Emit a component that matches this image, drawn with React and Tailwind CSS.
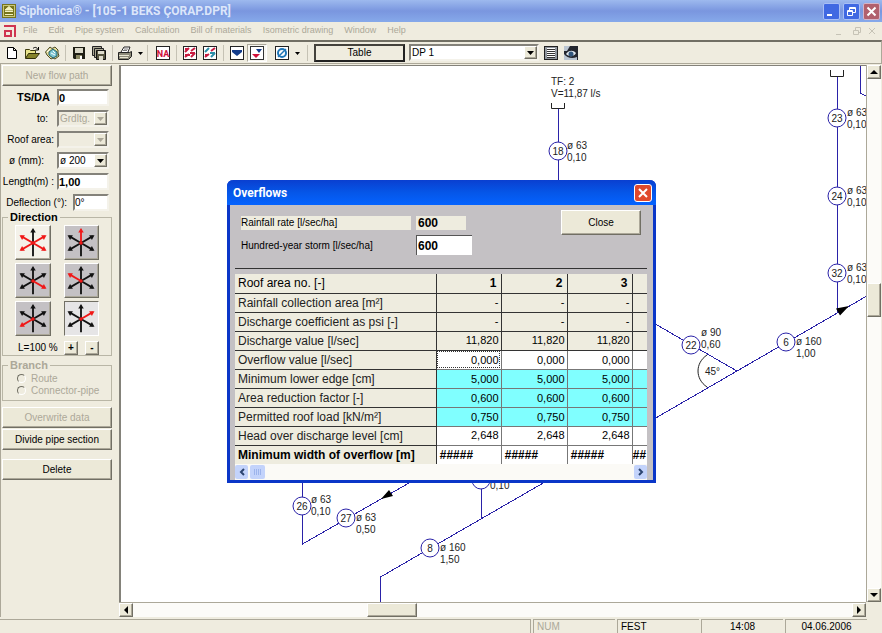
import { useState } from 'react';

const menus = ['File', 'Edit', 'Pipe system', 'Calculation', 'Bill of materials', 'Isometric drawing', 'Window', 'Help'];

const raised = 'border border-t-white border-l-white border-b-[#716f64] border-r-[#716f64] shadow-[inset_-1px_-1px_0_#aca899] bg-[#ece9d8]';
const sunken = 'border-2 border-t-[#84827a] border-l-[#84827a] border-b-[#f4f2ea] border-r-[#f4f2ea]';

// six spokes of the direction picker, clockwise from the top
const spokes = [
  [17, 3],
  [30, 10],
  [30, 25],
  [17, 32],
  [4, 25],
  [4, 10],
];

const directions = [
  { name: 'All horizontal', red: [1, 2, 4, 5] },
  { name: 'Up', red: [0] },
  { name: 'Right down', red: [2] },
  { name: 'Left up', red: [5] },
  { name: 'Left down', red: [4] },
  { name: 'Right up', red: [1] },
];

const columns = ['1', '2', '3'];
const rows = [
  { label: 'Rainfall collection area [m²]', value: '-', kind: 'fixed' },
  { label: 'Discharge coefficient as psi [-]', value: '-', kind: 'fixed' },
  { label: 'Discharge value [l/sec]', value: '11,820', kind: 'fixed' },
  { label: 'Overflow value [l/sec]', value: '0,000', kind: 'edit' },
  { label: 'Minimum lower edge [cm]', value: '5,000', kind: 'cyan' },
  { label: 'Area reduction factor [-]', value: '0,600', kind: 'cyan' },
  { label: 'Permitted roof load [kN/m²]', value: '0,750', kind: 'cyan' },
  { label: 'Head over discharge level [cm]', value: '2,648', kind: 'result' },
];

const cellColors = {
  fixed: 'border-[#333] bg-[#eeecdf]',
  edit: 'border-[#777] bg-white',
  cyan: 'border-[#777] bg-[#80ffff]',
  result: 'border-[#777] bg-white',
};

const nodes = [
  { id: '18', x: 558, y: 151, tx: 567, ty: 149, d: 'ø 63', l: '0,10' },
  { id: '23', x: 837, y: 118, tx: 847, ty: 116, d: 'ø 63', l: '0,10' },
  { id: '24', x: 837, y: 196, tx: 847, ty: 194, d: 'ø 63', l: '0,10' },
  { id: '32', x: 837, y: 273, tx: 847, ty: 271, d: 'ø 63', l: '0,10' },
  { id: '22', x: 691, y: 345, tx: 701, ty: 336, d: 'ø 90', l: '0,60' },
  { id: '6', x: 786, y: 342, tx: 796, ty: 345, d: 'ø 160', l: '1,00' },
  { id: '26', x: 302, y: 506, tx: 311, ty: 503, d: 'ø 63', l: '0,10' },
  { id: '27', x: 346, y: 518, tx: 356, ty: 521, d: 'ø 63', l: '0,50' },
  { id: '8', x: 430, y: 548, tx: 440, ty: 551, d: 'ø 160', l: '1,50' },
];

function TitleBar() {
  return (
    <header className="flex h-[22px] items-center bg-linear-to-b from-[#9db9ee] via-[#7a96df] to-[#86a9ea] pr-[2px] pl-[2px]">
      <svg width="14" height="14" viewBox="0 0 14 14">
        <rect width="14" height="14" fill="#77751c" />
        <rect x="1.500" y="1.500" width="11" height="11" fill="none" stroke="#c9c77c" />
        <path d="M3 6h8L7 2.500zM3 7.500h8M3 10.500h8" fill="#f5f3c0" stroke="#f5f3c0" />
      </svg>
      <h1 className="ml-[3px] flex-1 font-[Roboto,sans-serif] text-[12px] font-bold whitespace-nowrap text-[#dce6fa]">
        Siphonica® - [105-1 BEKS ÇORAP.DPR]
      </h1>
      <div className="flex gap-[3px]">
        <button aria-label="Minimize" className="h-[17px] w-[17px] rounded-[2px] border border-[#a9bff5] bg-[#4069e2]">
          <svg width="15" height="15"><path d="M3 11h5" stroke="#fff" strokeWidth="2" /></svg>
        </button>
        <button aria-label="Restore" className="h-[17px] w-[17px] rounded-[2px] border border-[#a9bff5] bg-[#4069e2]">
          <svg width="15" height="15" fill="none" stroke="#fff">
            <path d="M3.500 6.500h5v5h-5zM3 7.500h6M5.500 6V3.500h6v5H9M5.500 4.500h6" />
          </svg>
        </button>
        <button aria-label="Close window" className="h-[17px] w-[17px] rounded-[2px] border border-[#d3b4c8] bg-[#b1606d]">
          <svg width="15" height="15"><path d="M3.500 3.500l8 8M11.500 3.500l-8 8" stroke="#fff" strokeWidth="2" /></svg>
        </button>
      </div>
    </header>
  );
}

function MenuBar() {
  return (
    <nav className="flex h-[18px] items-center gap-[7px] bg-[#efecdf] pl-1 text-[9px] text-[#aca899]">
      <svg width="12" height="12" viewBox="0 0 12 12" fill="none" stroke="#cf3550" strokeWidth="2">
        <path d="M0 1h11v11M1 12V6h6v6M1 11h6" />
      </svg>
      <div className="flex flex-1 gap-[11px] whitespace-nowrap">
        {menus.map((m) => (
          <button key={m}>{m}</button>
        ))}
      </div>
      <svg width="44" height="12" fill="none" stroke="#c6c3b6" className="mr-1">
        <path d="M2 9.500h5M19.500 5.500h5v4h-5zM21.500 5V2.500h5v5H25M35 3l6 6M41 3l-6 6" />
      </svg>
    </nav>
  );
}

function Separator() {
  return <span className="mx-[3px] h-4 w-px bg-[#c5c2b4]" />;
}

function ToolButton({ label, children, wide, pressed }) {
  return (
    <button
      aria-label={label}
      className={`flex h-[18px] items-center justify-center ${wide ? 'w-[28px]' : 'w-[20px]'} ${
        pressed ? 'border border-t-[#aca899] border-l-[#aca899] border-r-white border-b-white bg-[#f8f7f1]' : ''
      }`}
    >
      <svg width={wide ? 26 : 16} height="16" viewBox={wide ? '0 0 26 16' : '0 0 16 16'} className="shrink-0">
        {children}
        {wide && <path d="M21 7h5l-2.500 3z" fill="#000" />}
      </svg>
    </button>
  );
}

function Toolbar() {
  return (
    <div className="flex h-[24px] items-center border-t-2 border-r border-b border-t-[#716f64] border-r-[#aca899] border-b-[#aca899] bg-[#efecdf] pl-[2px]">
      <ToolButton label="New">
        <path d="M3.500 2.500h6l3 3v8h-9zM9.500 2.500v3h3" fill="#fff" stroke="#000" />
      </ToolButton>
      <ToolButton label="Open">
        <path d="M1.500 13V4.500h4l1 1h5v3" fill="#e8e38a" stroke="#3f3d10" />
        <path d="M1.500 13.500l3-5h11l-4 5z" fill="#85832a" stroke="#2f2d08" />
        <path d="M9 3.500c2-2 4-1 5 1M14.500 2v3h-3" fill="none" stroke="#000" />
      </ToolButton>
      <ToolButton label="Open project">
        <path d="M1.500 7L6 2l2 1.500L11 2l3 3v3l1 3-4 3-2-1-2 1-4-4z" fill="#e4df9a" stroke="#4c4a24" />
        <path d="M5 7l4-3 4 3v4l-4 2-4-3z" fill="#7cc6d2" stroke="#1f5c6b" />
        <path d="M3 7l3-3M7 8l4 2M9 6l2 2" stroke="#fff" />
      </ToolButton>
      <Separator />
      <ToolButton label="Save">
        <path d="M2 2h12v12H3l-1-1z" fill="#1e1e14" />
        <rect x="4" y="3" width="8" height="5" fill="#d9d7c6" />
        <rect x="5" y="10" width="6" height="4" fill="#8a8862" />
        <rect x="9" y="11" width="2" height="3" fill="#fff" />
      </ToolButton>
      <ToolButton label="Save all">
        <path d="M1.500 1.500h9v9h-9z" fill="#aaa893" stroke="#222" />
        <path d="M3.500 3.500h9v9h-9z" fill="#aaa893" stroke="#222" />
        <path d="M5.500 5.500h9v9h-9z" fill="#55543e" stroke="#111" />
        <path d="M7 6h6v3H7zM8 11h4v4H8z" fill="#dedccc" />
      </ToolButton>
      <Separator />
      <ToolButton label="Print" wide>
        <path d="M4 7l3-5h6l-2 5" fill="#fff" stroke="#222" />
        <path d="M7 4h4M6 5.500h4" stroke="#777" />
        <path d="M1.500 7.500h11l2-1v5l-3 3h-10z" fill="#8c8a78" stroke="#222" />
        <path d="M2 10.500h10M3 12.500h8" stroke="#e9e6d2" />
      </ToolButton>
      <Separator />
      <span className="w-[2px]" />
      <ToolButton label="NA">
        <rect x="1.500" y="1.500" width="13" height="13" fill="#fff" stroke="#222" />
        <text x="8" y="12" textAnchor="middle" fontSize="9" fontWeight="bold" fill="#d0103a" className="font-[Roboto,sans-serif]">NA</text>
      </ToolButton>
      <Separator />
      <ToolButton label="Isometric view red">
        <rect x="1.500" y="1.500" width="13" height="13" fill="#fff" stroke="#222" />
        <path d="M3 7l4-4M9 6l4-3M3 12l4-3M9 12l4-4M3 4h4M8 8h5M3 10h5" stroke="#c81c40" strokeWidth="2" />
      </ToolButton>
      <ToolButton label="Isometric view mixed">
        <rect x="1.500" y="1.500" width="13" height="13" fill="#fff" stroke="#222" />
        <path d="M3 7l4-4M9 12l4-4M8 8h5" stroke="#2b8fa8" strokeWidth="2" />
        <path d="M9 6l4-3M3 12l4-3M3 10h3" stroke="#c81c40" strokeWidth="2" />
      </ToolButton>
      <Separator />
      <ToolButton label="Show all">
        <rect x="1.500" y="1.500" width="13" height="13" fill="#fff" stroke="#222" />
        <path d="M3 5h10v2l-5 4-5-4z" fill="#123c8c" />
      </ToolButton>
      <ToolButton label="Filter" pressed>
        <rect x="1.500" y="1.500" width="13" height="13" fill="#fff" stroke="#333" />
        <path d="M7 4h6l-3 4z" fill="#123c8c" />
        <path d="M3 9h8l-4 4z" fill="#d0103a" />
      </ToolButton>
      <span className="w-[6px]" />
      <ToolButton label="Diameter" wide>
        <rect x="1.500" y="1.500" width="13" height="13" fill="#fff" stroke="#222" />
        <circle cx="8" cy="8" r="4" fill="none" stroke="#2077b8" strokeWidth="2" />
        <path d="M4 12l8-8" stroke="#2077b8" strokeWidth="1.500" />
      </ToolButton>
      <span className="mx-[6px] h-4 w-px bg-[#c5c2b4]" />
      <button className="h-[18px] w-[91px] border-2 border-t-[#44423c] border-l-[#44423c] border-r-[#222] border-b-[#222] bg-[#efecdf] text-[10px] leading-[14px]">
        Table
      </button>
      <Combo label="Discharge pipe" options={['DP 1']} className="ml-1 w-[130px]" />
      <span className="w-[2px]" />
      <ToolButton label="List">
        <rect x="1.500" y="1.500" width="13" height="13" fill="#8e949c" stroke="#222" />
        <rect x="4" y="3" width="8" height="10" fill="#fff" />
        <path d="M4 4.500h8M4 6.500h8M4 8.500h8M4 10.500h8M4 12.500h8" stroke="#333" />
      </ToolButton>
      <ToolButton label="Preview">
        <rect x="1" y="1" width="14" height="14" fill="#23262e" />
        <path d="M1 1h6L4 6H1zM1 9c3 4 8 5 13 3v3H1z" fill="#b9c4d0" />
        <path d="M3 9c3-4 7-4 10-1-2 4-7 4-10 1z" fill="#dfe6ee" />
        <circle cx="8" cy="9" r="2.500" fill="#31567c" />
      </ToolButton>
    </div>
  );
}

function Combo({ label, id, options, disabled, className }) {
  return (
    <div className={`relative h-[17px] ${sunken} ${disabled ? 'bg-[#efecdf]' : 'bg-white'} ${className}`}>
      <select
        id={id}
        aria-label={label}
        disabled={disabled}
        className={`block h-[13px] w-full appearance-none pl-[1px] text-[10px] leading-[13px] outline-none ${
          disabled ? 'text-[#aca899]' : 'text-black'
        }`}
      >
        {options.map((o) => (
          <option key={o}>{o}</option>
        ))}
      </select>
      <span className={`pointer-events-none absolute top-0 right-0 flex h-[13px] w-[13px] items-center justify-center ${raised}`}>
        <svg width="7" height="4"><path d="M0 0h7L3.500 4z" fill={disabled ? '#aca899' : '#000'} /></svg>
      </span>
    </div>
  );
}

function Field({ id, label, bold, children }) {
  return (
    <div className="flex h-[17px] items-center justify-end gap-[3px]">
      <label htmlFor={id} className={`whitespace-nowrap ${bold ? 'pr-1 text-[11px] font-bold' : ''}`}>
        {label}
      </label>
      {children}
    </div>
  );
}

function DirectionIcon({ red }) {
  return (
    <svg width="32" height="32" viewBox="0 0 34 35">
      {spokes.map(([x, y], i) => {
        const color = red.includes(i) ? '#f01818' : '#111';
        const angle = (Math.atan2(y - 17.5, x - 17) * 180) / Math.PI;
        return (
          <g key={i}>
            <path d={`M17 17.500L${x} ${y}`} stroke={color} strokeWidth="2" />
            {i !== 3 && <path d="M2 0l-5-3v6z" fill={color} transform={`translate(${x} ${y}) rotate(${angle})`} />}
          </g>
        );
      })}
      <circle cx="17" cy="17.500" r="2" fill="#f01818" />
    </svg>
  );
}

function SideButton({ children, disabled, className = '' }) {
  return (
    <button disabled={disabled} className={`h-[21px] w-full text-[10px] ${raised} ${disabled ? 'text-[#aca899]' : ''} ${className}`}>
      {children}
    </button>
  );
}

function Sidebar() {
  const [direction, setDirection] = useState(5);

  return (
    <aside className="w-[119px] shrink-0 border-l border-[#aca899] bg-[#efecdf] pt-px pr-[7px] pl-px text-[10px]">
      <SideButton disabled>New flow path</SideButton>
      <div className="mt-[3px] flex flex-col gap-1 pr-[3px]">
        <Field id="ts" label="TS/DA" bold>
          <input id="ts" defaultValue="0" className={`h-[17px] w-[52px] bg-white text-[11px] font-bold ${sunken}`} />
        </Field>
        <Field id="to" label={<span className="pr-[6px]">to:</span>}>
          <Combo id="to" options={['Grdltg.']} disabled className="w-[52px]" />
        </Field>
        <Field id="roof" label="Roof area:">
          <Combo id="roof" options={['']} disabled className="w-[52px]" />
        </Field>
        <Field id="dia" label={<span className="pr-[10px]">ø (mm):</span>}>
          <Combo id="dia" options={['ø 200']} className="w-[52px]" />
        </Field>
        <Field id="len" label="Length(m) :">
          <input id="len" defaultValue="1,00" className={`h-[17px] w-[52px] bg-white text-[11px] font-bold ${sunken}`} />
        </Field>
        <Field id="defl" label={<span className="pr-[3px]">Deflection (°):</span>}>
          <input id="defl" defaultValue="0°" className={`h-[17px] w-[36px] bg-white text-[10px] ${sunken}`} />
        </Field>
      </div>

      <fieldset className="border border-[#b9b6a6] px-[12px]">
        <legend className="-ml-[7px] px-[2px] text-[11px] leading-[13px] font-bold">Direction</legend>
        <div className="grid grid-cols-2 gap-x-[13px] gap-y-[3px] pt-px">
          {directions.map((d, i) => (
            <button
              key={d.name}
              aria-label={d.name}
              aria-pressed={direction === i}
              onClick={() => setDirection(i)}
              className={`flex h-[35px] items-center justify-center border ${
                direction === i
                  ? 'border-t-[#716f64] border-l-[#716f64] border-r-white border-b-white bg-[#e6e5e6]'
                  : 'border-t-white border-l-white border-r-[#716f64] border-b-[#716f64] shadow-[inset_-1px_-1px_0_#aca899]'
              } ${direction !== i && (i === 0 ? 'bg-[#f4f2ea]' : 'bg-[#c4c1c4]')}`}
            >
              <DirectionIcon red={d.red} />
            </button>
          ))}
        </div>
        <div className="flex h-[19px] items-end">
          <span className="flex-1 pl-[3px] leading-[14px]">L=100 %</span>
          <button aria-label="Longer" className={`mr-[7px] h-[14px] w-[14px] leading-[10px] font-bold ${raised}`}>+</button>
          <button aria-label="Shorter" className={`h-[14px] w-[14px] leading-[10px] font-bold ${raised}`}>-</button>
        </div>
      </fieldset>

      <fieldset disabled className="mt-[3px] border border-[#b9b6a6] pb-1 pl-[14px] text-[#aca899]">
        <legend className="-ml-[9px] px-[2px] text-[11px] leading-[13px] font-bold">Branch</legend>
        {['Route', 'Connector-pipe'].map((b) => (
          <label key={b} className="flex h-[12px] items-center gap-[5px] whitespace-nowrap">
            <input
              type="radio"
              name="branch"
              className="h-[9px] w-[9px] shrink-0 appearance-none rounded-full border border-t-[#716f64] border-l-[#716f64] border-r-white border-b-white"
            />
            {b}
          </label>
        ))}
      </fieldset>

      <SideButton disabled className="mt-[6px]">Overwrite data</SideButton>
      <SideButton className="mt-px">Divide pipe section</SideButton>
      <SideButton className="mt-[9px]">Delete</SideButton>
    </aside>
  );
}

function Diagram() {
  return (
    <svg width="100%" height="100%" className="absolute inset-0" fontSize="10" fill="#222">
      <g transform="translate(-121 -66)">
        <g fill="none" stroke="#2a22a8" shapeRendering="crispEdges">
          <path d="M558.500 109V190M837.500 77V312M860.500 60V93L866 96M481.500 480V518M302.500 480V544L409 483" />
          <path d="M380.500 602V577L872 293M650 321L737 371" />
        </g>
        <g fill="none" stroke="#222">
          <path d="M551.500 103v5.500h13v-5.500M830.500 70v6.500h13v-6.500" />
          <path d="M707 355c-12 8-12 24 0 32" />
        </g>
        <path d="M849 306L836 308.500L840 315.500zM381 499L389 490L393 496z" fill="#000" />
        <circle cx="481" cy="480" r="9" fill="#fff" stroke="#2a22a8" />
        <text x="490" y="489">0,10</text>
        {nodes.map((n) => (
          <g key={n.id}>
            <circle cx={n.x} cy={n.y} r="9" fill="#fff" stroke="#2a22a8" />
            <text x={n.x} y={n.y + 4} textAnchor="middle">{n.id}</text>
            <text x={n.tx} y={n.ty}>{n.d}</text>
            <text x={n.tx} y={n.ty + 12}>{n.l}</text>
          </g>
        ))}
        <text x="551" y="85">TF: 2</text>
        <text x="551" y="97">V=11,87 l/s</text>
        <text x="705" y="375">45°</text>
      </g>
    </svg>
  );
}

function OverflowTable() {
  return (
    <table className="w-full table-fixed border-collapse text-[11px]">
      <colgroup>
        <col className="w-[201px]" />
        <col className="w-[65px]" />
        <col className="w-[66px]" />
        <col className="w-[65px]" />
        <col />
      </colgroup>
      <thead>
        <tr className="h-[19px] bg-[#eeecdf]">
          <th className="border-r border-b border-[#333] px-[3px] py-0 text-left text-[12px] leading-[18px] font-normal">
            Roof area no. [-]
          </th>
          {columns.map((c) => (
            <th key={c} className="border-r border-b border-[#333] px-1 py-0 text-right text-[12px] leading-[18px]">{c}</th>
          ))}
          <td className="border-b border-[#333]" />
        </tr>
      </thead>
      <tbody>
        {rows.map((row) => (
          <tr key={row.label} className="h-[19px]">
            <th className="border-r border-b border-[#333] bg-[#eeecdf] px-[3px] py-0 text-left text-[12px] leading-[18px] font-normal whitespace-nowrap text-[#222]">
              {row.label}
            </th>
            {columns.map((c) => (
              <td
                key={c}
                className={`border-r border-b px-[2px] py-0 text-right ${cellColors[row.kind]} ${
                  row.kind === 'edit' && c === '1' ? 'outline-1 -outline-offset-2 outline-[#333] outline-dotted' : ''
                }`}
              >
                {row.kind === 'edit' || row.kind === 'cyan' ? (
                  <input
                    aria-label={`${row.label} ${c}`}
                    defaultValue={row.value}
                    className="block h-[18px] w-full text-right outline-none"
                  />
                ) : (
                  row.value
                )}
              </td>
            ))}
            <td className={`border-b ${cellColors[row.kind]}`} />
          </tr>
        ))}
        <tr className="h-[19px] font-bold">
          <th className="border-r border-[#333] bg-[#eeecdf] px-[3px] py-0 text-left text-[12px] leading-[18px] whitespace-nowrap">
            Minimum width of overflow [m]
          </th>
          {columns.map((c) => (
            <td key={c} className="border-r border-[#777] bg-white px-[3px] py-0 text-[12px] leading-[18px] italic">#####</td>
          ))}
          <td className="bg-white p-0 text-[12px] leading-[18px] italic">##</td>
        </tr>
      </tbody>
    </table>
  );
}

function OverflowDialog() {
  return (
    <section
      role="dialog"
      aria-label="Overflows"
      className="absolute top-[114px] left-[106px] w-[429px] rounded-t-[6px] border-x-[3px] border-b-[3px] border-[#0a36c8] bg-[#c4c1c4]"
    >
      <div className="-mx-[3px] flex h-[25px] items-center rounded-t-[6px] bg-linear-to-b from-[#0a3fd0] via-[#0556e8] to-[#0463ff] pr-1 pl-[6px]">
        <h2 className="flex-1 font-[Roboto,sans-serif] text-[12px] font-bold text-white">Overflows</h2>
        <button aria-label="Close dialog" className="h-[18px] w-[18px] rounded-[3px] border border-white bg-[#e0492c]">
          <svg width="16" height="16"><path d="M4 4l8 8M12 4l-8 8" stroke="#fff" strokeWidth="2" /></svg>
        </button>
      </div>
      <div className="pr-[6px] pl-[5px]">
        <div className="flex h-[64px] items-start border-b border-[#333] pt-[5px] pr-[6px] pl-[6px] text-[10px]">
          <div className="mt-[6px] grid grid-cols-[170px_56px] items-center gap-x-[5px] gap-y-[5px]">
            <span className="h-[14px] bg-[#eeecdf] leading-[14px]">Rainfall rate [l/sec/ha]</span>
            <output className="h-[14px] w-[50px] bg-[#eeecdf] pl-[2px] text-[12px] leading-[14px] font-bold">600</output>
            <label htmlFor="storm">Hundred-year storm [l/sec/ha]</label>
            <input id="storm" defaultValue="600" className="h-[20px] w-[56px] border-t border-l border-[#555] bg-white pl-px text-[12px] font-bold" />
          </div>
          <button className={`ml-auto h-[25px] w-[80px] ${raised}`}>Close</button>
        </div>
        <div className="mt-[5px]">
          <OverflowTable />
          <div className="flex h-[16px] items-center gap-[2px] bg-[#fbfaf6]">
            <button aria-label="Scroll left" className="flex h-[14px] w-[13px] items-center justify-center rounded-[2px] bg-[#c3d3fb]">
              <svg width="6" height="8" fill="none" stroke="#2c4470" strokeWidth="2"><path d="M5 1L2 4l3 3" /></svg>
            </button>
            <span className="flex h-[14px] w-[15px] items-center justify-center rounded-[2px] bg-[#c3d3fb]">
              <svg width="7" height="6" stroke="#9db4ec"><path d="M.5 0v6M2.500 0v6M4.500 0v6M6.500 0v6" /></svg>
            </span>
            <button aria-label="Scroll right" className="ml-auto flex h-[14px] w-[13px] items-center justify-center rounded-[2px] bg-[#c3d3fb]">
              <svg width="6" height="8" fill="none" stroke="#2c4470" strokeWidth="2"><path d="M1 1l3 3-3 3" /></svg>
            </button>
          </div>
        </div>
      </div>
    </section>
  );
}

function ScrollArrow({ label, d }) {
  return (
    <button aria-label={label} className={`flex h-[14px] w-[14px] shrink-0 items-center justify-center ${raised}`}>
      <svg width="8" height="8" className="shrink-0"><path d={d} fill="#000" /></svg>
    </button>
  );
}

function Workspace() {
  return (
    <main className="flex min-w-0 flex-1 flex-col bg-[#efecdf] pt-px">
      <div className="flex min-h-0 flex-1">
        <div className="relative min-w-0 flex-1 overflow-hidden border-t border-l-2 border-[#84827a] bg-white">
          <Diagram />
          <OverflowDialog />
        </div>
        <div className="mr-px flex w-[15px] flex-col border-l border-[#aca899] bg-[#fcfbf8]">
          <ScrollArrow label="Scroll up" d="M0 6h8L4 2z" />
          <span className="flex-[43]" />
          <span className={`h-[34px] ${raised}`} />
          <span className="flex-[57]" />
          <ScrollArrow label="Scroll down" d="M0 2h8L4 6z" />
        </div>
      </div>
      <div className="mr-4 flex h-[15px] border-t border-[#aca899] bg-[#fcfbf8]">
        <ScrollArrow label="Scroll canvas left" d="M6 0v8L2 4z" />
        <span className="flex-[35]" />
        <span className={`w-[50px] ${raised}`} />
        <span className="flex-[65]" />
        <ScrollArrow label="Scroll canvas right" d="M2 0v8L6 4z" />
      </div>
    </main>
  );
}

function StatusBar() {
  const cell = 'h-[14px] w-[82px] border-t border-l border-[#aca899] leading-[14px]';
  return (
    <footer className="flex h-[16px] items-end gap-[2px] bg-[#efecdf] pr-[15px] text-[10px]">
      <span className="h-[14px] flex-1 border-t border-r border-[#aca899]" />
      <span className={`${cell} pl-[3px] text-[#aca899]`}>NUM</span>
      <span className={`${cell} pl-[3px]`}>FEST</span>
      <span className={`${cell} text-center`}>14:08</span>
      <span className={`${cell} text-center`}>04.06.2006</span>
    </footer>
  );
}

export default function App() {
  return (
    <div className="flex h-screen flex-col overflow-hidden bg-[#efecdf] font-['Liberation_Sans',Arial,sans-serif] text-black">
      <TitleBar />
      <MenuBar />
      <Toolbar />
      <div className="flex min-h-0 flex-1">
        <Sidebar />
        <Workspace />
      </div>
      <StatusBar />
    </div>
  );
}
